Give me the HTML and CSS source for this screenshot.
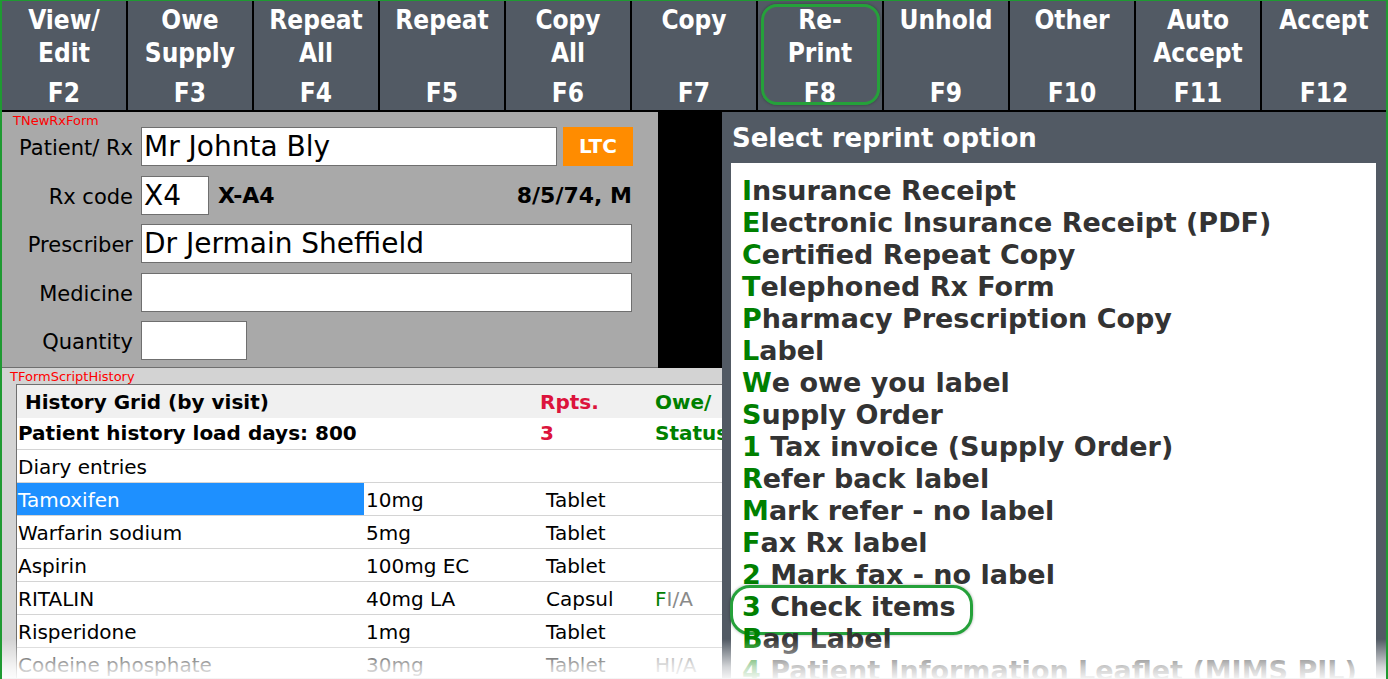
FILE: index.html
```html
<!DOCTYPE html>
<html>
<head>
<meta charset="utf-8">
<link rel="stylesheet" href="styles.css">
</head>
<body>
<div class="app">
  <div class="toolbar">
    <div class="btn"><div class="lbl">View/<br>Edit</div><div class="key">F2</div></div>
    <div class="btn"><div class="lbl">Owe<br>Supply</div><div class="key">F3</div></div>
    <div class="btn"><div class="lbl">Repeat<br>All</div><div class="key">F4</div></div>
    <div class="btn"><div class="lbl">Repeat</div><div class="key">F5</div></div>
    <div class="btn"><div class="lbl">Copy<br>All</div><div class="key">F6</div></div>
    <div class="btn"><div class="lbl">Copy</div><div class="key">F7</div></div>
    <div class="btn btn-hl"><div class="lbl">Re-<br>Print</div><div class="key">F8</div></div>
    <div class="btn"><div class="lbl">Unhold</div><div class="key">F9</div></div>
    <div class="btn"><div class="lbl">Other</div><div class="key">F10</div></div>
    <div class="btn"><div class="lbl">Auto<br>Accept</div><div class="key">F11</div></div>
    <div class="btn btn-last"><div class="lbl">Accept</div><div class="key">F12</div></div>
  </div>
  <div class="main">
    <div class="left">
      <div class="top">
        <div class="form">
          <div class="tag">TNewRxForm</div>
          <div class="rows">
            <div class="flabel">Patient/ Rx</div>
            <div class="fcell"><div class="input w-pat">Mr Johnta Bly</div><div class="ltc">LTC</div></div>
            <div class="flabel">Rx code</div>
            <div class="fcell"><div class="input w-code">X4</div><div class="code">X-A4</div><div class="dob">8/5/74, M</div></div>
            <div class="flabel">Prescriber</div>
            <div class="fcell"><div class="input w-full">Dr Jermain Sheffield</div></div>
            <div class="flabel">Medicine</div>
            <div class="fcell"><div class="input w-full"></div></div>
            <div class="flabel">Quantity</div>
            <div class="fcell"><div class="input w-qty"></div></div>
          </div>
        </div>
        <div class="filler"></div>
      </div>
      <div class="history">
        <div class="tag tag-h">TFormScriptHistory</div>
        <div class="grid">
          <div class="row head">
            <div class="c-title">History Grid (by visit)</div>
            <div class="c-rpt red">Rpts.</div>
            <div class="c-owe green">Owe/</div>
          </div>
          <div class="row sub">
            <div class="c-title2">Patient history load days: 800</div>
            <div class="c-rpt red">3</div>
            <div class="c-owe green">Status</div>
          </div>
          <div class="row"><div class="c1">Diary entries</div><div class="c2"></div><div class="c3"></div><div class="c4"></div></div>
          <div class="row"><div class="c1 sel">Tamoxifen</div><div class="c2">10mg</div><div class="c3">Tablet</div><div class="c4"></div></div>
          <div class="row"><div class="c1">Warfarin sodium</div><div class="c2">5mg</div><div class="c3">Tablet</div><div class="c4"></div></div>
          <div class="row"><div class="c1">Aspirin</div><div class="c2">100mg EC</div><div class="c3">Tablet</div><div class="c4"></div></div>
          <div class="row"><div class="c1">RITALIN</div><div class="c2">40mg LA</div><div class="c3">Capsul</div><div class="c4"><span class="green">F</span><span class="grey">I/A</span></div></div>
          <div class="row"><div class="c1">Risperidone</div><div class="c2">1mg</div><div class="c3">Tablet</div><div class="c4"></div></div>
          <div class="row"><div class="c1">Codeine phosphate</div><div class="c2">30mg</div><div class="c3">Tablet</div><div class="c4"><span class="grey">HI/A</span></div></div>
        </div>
      </div>
    </div>
    <div class="right">
      <div class="rtitle">Select reprint option</div>
      <div class="list">
        <div class="item"><b>I</b>nsurance Receipt</div>
        <div class="item"><b>E</b>lectronic Insurance Receipt (PDF)</div>
        <div class="item"><b>C</b>ertified Repeat Copy</div>
        <div class="item"><b>T</b>elephoned Rx Form</div>
        <div class="item"><b>P</b>harmacy Prescription Copy</div>
        <div class="item"><b>L</b>abel</div>
        <div class="item"><b>W</b>e owe you label</div>
        <div class="item"><b>S</b>upply Order</div>
        <div class="item"><b>1</b> Tax invoice (Supply Order)</div>
        <div class="item"><b>R</b>efer back label</div>
        <div class="item"><b>M</b>ark refer - no label</div>
        <div class="item"><b>F</b>ax Rx label</div>
        <div class="item"><b>2</b> Mark fax - no label</div>
        <div class="item item-hl"><b>3</b> Check items</div>
        <div class="item"><b>B</b>ag Label</div>
        <div class="item"><b>4</b> Patient Information Leaflet (MIMS PIL)</div>
      </div>
    </div>
  </div>
  <div class="fade"></div>
</div>
</body>
</html>
```
FILE: styles.css
```css
* { box-sizing: border-box; }
html, body { margin: 0; padding: 0; background: #fff; }
body { font-family: "DejaVu Sans", sans-serif; }

.app {
  position: relative;
  width: 1388px;
  height: 679px;
  overflow: hidden;
  border-top: 1px solid #1f9a32;
  border-left: 2px solid #1f9a32;
  border-right: 2px solid #1f9a32;
  background: #525a64;
}

.toolbar {
  display: flex;
  flex-shrink: 0;
  height: 111px;
  background: #525a64;
  border-bottom: 2px solid #000;
  font-family: "DejaVu Sans Condensed", "DejaVu Sans", sans-serif;
}
.btn {
  position: relative;
  flex: 1 1 0;
  display: flex;
  flex-direction: column;
  align-items: center;
  border-right: 2px solid #000;
  color: #fff;
  font-weight: bold;
  font-size: 26px;
  line-height: 33px;
  padding-top: 3px;
}
.btn-last { border-right: none; }
.lbl { text-align: center; }
.key { margin-top: auto; }
.btn-hl::after {
  content: "";
  position: absolute;
  left: 3px;
  right: 2px;
  top: 3px;
  bottom: 5px;
  border: 3px solid #25a13a;
  border-radius: 16px;
  box-shadow: 0 0 3px rgba(0,0,0,0.35);
}

.main {
  display: flex;
  height: 566px;
}
.left {
  width: 720px;
  flex-shrink: 0;
  display: flex;
  flex-direction: column;
}
.top {
  display: flex;
  flex-shrink: 0;
  height: 256px;
  background: #000;
}
.form {
  width: 656px;
  background: #a9a9a9;
  border-bottom: 1px solid #6f6f6f;
}
.filler { flex: 1; }
.tag {
  color: #ff0000;
  font-size: 13px;
  line-height: 14px;
  padding-left: 11px;
  padding-top: 2px;
  height: 15px;
}
.rows {
  display: grid;
  grid-template-columns: 131px 491px;
  grid-auto-rows: 39px;
  column-gap: 8px;
  row-gap: 9.5px;
}
.flabel {
  text-align: right;
  font-size: 21px;
  line-height: 43px;
  color: #000;
  white-space: nowrap;
}
.fcell {
  display: flex;
  align-items: center;
}
.input {
  flex-shrink: 0;
  height: 39px;
  background: #fff;
  border: 1px solid #6f6f6f;
  font-size: 28px;
  line-height: 37px;
  padding-left: 2px;
  color: #000;
  white-space: nowrap;
  overflow: hidden;
}
.w-pat { width: 416px; }
.w-code { width: 68px; }
.w-full { width: 491px; }
.w-qty { width: 106px; }
.ltc {
  flex-shrink: 0;
  margin-left: 6px;
  width: 70px;
  height: 39px;
  background: #ff8c00;
  color: #fff;
  font-weight: bold;
  font-size: 20px;
  line-height: 39px;
  text-align: center;
}
.code {
  margin-left: 9px;
  font-weight: bold;
  font-size: 22px;
  line-height: 41px;
}
.dob {
  margin-left: auto;
  font-weight: bold;
  font-size: 22px;
  line-height: 41px;
}

.history {
  flex: 1;
  min-height: 0;
  background: #d3d3d3;
  display: flex;
  flex-direction: column;
}
.tag-h {
  padding-left: 8px;
  padding-top: 2px;
  height: 16px;
  flex-shrink: 0;
}
.grid {
  margin-left: 14px;
  background: #fff;
  border-top: 1px solid #6f6f6f;
  border-left: 1px solid #6f6f6f;
  flex: 1;
  min-height: 0;
  overflow: hidden;
}
.row {
  display: flex;
  height: 33px;
  border-bottom: 1px solid #d4d4d4;
  font-size: 20px;
  line-height: 29px;
  color: #000;
  white-space: nowrap;
}
.row > div { flex: none; overflow: hidden; padding-top: 3px; }
.row.head {
  background: #f0f0f0;
  border-bottom: none;
  font-weight: bold;
}
.row.sub { font-weight: bold; height: 32px; }
.row.sub > div { padding-top: 1px; }
.c-title { width: 523px; padding-left: 8px; }
.c-title2 { width: 523px; padding-left: 1px; }
.c-rpt { width: 115px; }
.c-owe { width: 120px; }
.c1 { width: 347px; padding-left: 1px; }
.c2 { width: 180px; padding-left: 2px; }
.c3 { width: 109px; padding-left: 2px; }
.c4 { width: 100px; padding-left: 2px; }
.sel { background: #1e90ff; color: #fff; }
.red { color: #dc143c; }
.green { color: #008000; }
.grey { color: #8a8a8a; }

.right {
  flex: 1;
  background: #525a64;
  padding: 10px 10px 0 9px;
  display: flex;
  flex-direction: column;
}
.rtitle {
  flex-shrink: 0;
  color: #fff;
  font-weight: bold;
  font-size: 26px;
  line-height: 32px;
  padding-left: 1px;
  height: 41px;
}
.list {
  flex: 1;
  min-height: 0;
  background: #fff;
  padding: 12px 0 0 11px;
}
.item {
  position: relative;
  font-weight: bold;
  font-size: 27px;
  line-height: 32px;
  color: #333;
  white-space: nowrap;
}
.item b { color: #008000; }
.item-hl::after {
  content: "";
  position: absolute;
  left: -12px;
  top: -6px;
  width: 237px;
  height: 44px;
  border: 3px solid #25a13a;
  border-radius: 20px;
  box-shadow: 0 0 3px rgba(0,0,0,0.35);
}

.fade {
  position: absolute;
  left: -2px;
  right: -2px;
  bottom: 0;
  height: 40px;
  background: linear-gradient(to bottom, rgba(255,255,255,0) 0%, rgba(255,255,255,0.75) 70%, rgba(255,255,255,0.95) 100%);
  pointer-events: none;
}
```
